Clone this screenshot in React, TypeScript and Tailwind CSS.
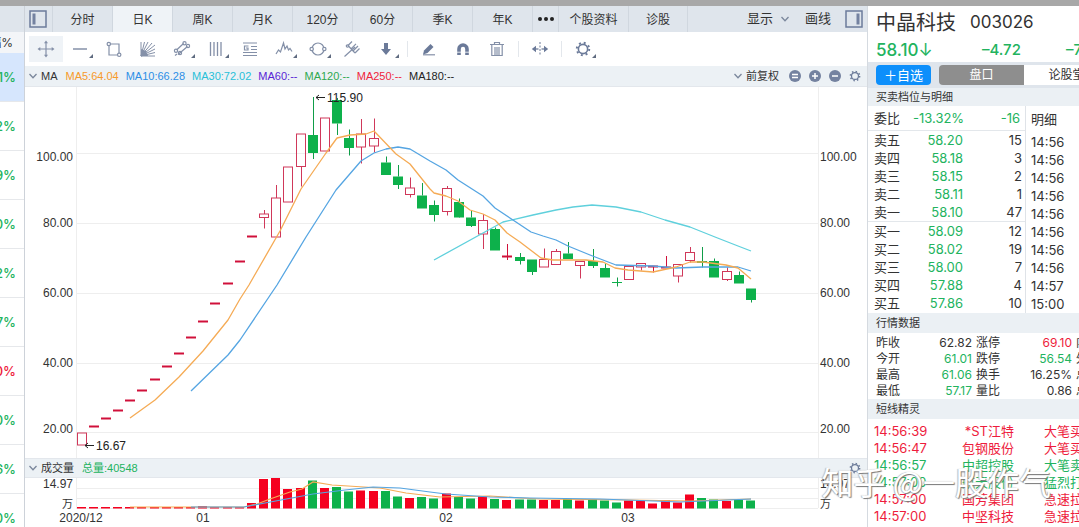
import { ReactNode } from 'react'
import clsx from 'clsx'

type Candle = {
  up: boolean
  top: number
  bottom: number
  high: number
  low: number
  vol: number
}

const STEP = 12.17
const FIRST = 81.5

const c = (
  up: boolean,
  top: number,
  bottom: number,
  high: number,
  low: number,
  vol: number
): Candle => ({ up, top, bottom, high, low, vol })

// limit-up days, drawn as a flat dash
const flat = (y: number, vol = 507): Candle => c(true, y, y, y, y, vol)

const candles: Candle[] = [
  c(true, 433, 445, 433, 445, 507),
  flat(426.5),
  flat(418.5),
  flat(410.5),
  flat(400.5),
  flat(390.5),
  flat(379.5),
  flat(366.5),
  flat(353.5),
  flat(337.5),
  flat(321.5, 506),
  flat(303.5),
  flat(283.5),
  flat(261.5),
  flat(236.5, 503),
  c(true, 214, 217.5, 210, 228.5, 479),
  c(true, 198, 237, 185, 237, 478),
  c(true, 167, 202, 167, 202, 489),
  c(true, 134, 166.5, 134, 186.5, 488),
  c(false, 135, 153, 97, 159, 480.5),
  c(true, 118, 151, 118, 151, 488),
  c(false, 100, 123.5, 98, 135, 487),
  c(false, 138, 148, 129.5, 155.5, 491.5),
  c(true, 134, 147, 119, 163.5, 490.5),
  c(true, 138.5, 146, 118.5, 152.5, 491),
  c(false, 162.5, 175, 156.5, 175, 491),
  c(false, 176.5, 185, 165, 189, 496.5),
  c(true, 188, 194.5, 177.5, 197.5, 498),
  c(false, 195.5, 208.5, 183, 208.5, 497),
  c(false, 205, 215, 200.5, 221.5, 498.5),
  c(true, 188.5, 211.5, 186, 215.5, 493.5),
  c(false, 202, 217.5, 198.5, 218, 497),
  c(false, 217.5, 226, 210, 227, 498.5),
  c(true, 220.5, 234, 214, 249, 496),
  c(false, 229, 250.5, 227.5, 250.5, 499),
  c(true, 256.5, 256.5, 244, 260, 500),
  c(false, 257, 261, 253, 264.5, 499.5),
  c(false, 259.5, 272, 259.5, 275, 499.5),
  c(true, 259.5, 267, 248.5, 267, 500),
  c(true, 251.5, 264.5, 249, 264.5, 500),
  c(false, 253.5, 259, 242, 259, 499),
  c(true, 261.5, 265.5, 261.5, 278.5, 500.5),
  c(false, 261, 266, 249, 268, 499),
  c(false, 268, 277.5, 263.5, 277.5, 500.5),
  c(false, 282, 283, 277.5, 286.5, 502.5),
  c(true, 266.5, 279.5, 266.5, 279.5, 500.5),
  c(true, 263.5, 267, 263.5, 270.5, 500.5),
  c(true, 266.5, 266.5, 266.5, 272.5, 503.5),
  c(true, 267.5, 267.5, 256, 268, 500),
  c(true, 264.5, 276, 264.5, 282.5, 502.5),
  c(true, 252.5, 260.5, 247, 262.5, 494.5),
  c(false, 261, 263, 247, 267.5, 498),
  c(false, 261, 277.5, 258.5, 277.5, 499.5),
  c(true, 271.5, 279.5, 267.5, 281, 501),
  c(false, 275, 283.5, 271.5, 283.5, 499.5),
  c(false, 288.5, 300, 288.5, 302.5, 500.5),
]

const ma5 =
  '130,418 155,400 179,377 203,351 228,320 240,299 249,285 280,231 301,189 326,153 337,138 350,135 366,134 374,131 396,154 410,164 430,189 434,193 446,196 458,201 470,210 483,214 495,220 507,233 520,242 541,258 553,260 586,260 603,262 615,268 628,270 653,272 676,267 690,262 703,262 726,265 738,268 751,279'
const ma10 =
  '191,391 228,355 240,340 277,285 306,237 336,190 361,161 374,153 386,149 398,147 410,149 430,161 446,170 458,180 483,196 495,208 516,222 531,232 543,236 556,240 568,246 590,255 603,260 616,265 653,266 676,268 703,267 738,267 751,271'
const ma30 =
  '434,260 483,233 503,222 533,215 556,210 573,207 592,205 604,206 616,207 641,212 665,220 690,227 715,237 738,246 751,251'
const vol5 =
  '130,507 244,507 257,504 270,499 290,492 302,489 313,482 332,485 380,488 406,493 440,497 490,496 520,498 540,499 630,500 690,501 751,499'
const vol10 =
  '191,507 244,507 265,503 313,494 345,490 373,487 400,488 430,492 446,494 490,497 530,498 600,499 680,502 751,499'

const priceTicks = [
  { label: '100.00', line: 153, y: 161 },
  { label: '80.00', line: 223, y: 227 },
  { label: '60.00', line: 293, y: 297 },
  { label: '40.00', line: 363, y: 367 },
  { label: '20.00', line: 432, y: 433 },
]

const periods = ['分时', '日K', '周K', '月K', '120分', '60分', '季K', '年K']

const averages = [
  { text: 'MA5:64.04', color: 'text-[#f79a2b]' },
  { text: 'MA10:66.28', color: 'text-[#2d8fe6]' },
  { text: 'MA30:72.02', color: 'text-[#27c0d8]' },
  { text: 'MA60:--', color: 'text-[#5a1fd6]' },
  { text: 'MA120:--', color: 'text-[#2fa84f]' },
  { text: 'MA250:--', color: 'text-[#f0243c]' },
  { text: 'MA180:--', color: 'text-[#222222]' },
]

const changes = ['1%', '2%', '9%', '0%', '2%', '7%', '0%', '0%', '6%', '0%']

const sells = [
  ['卖五', '58.20', '15'],
  ['卖四', '58.18', '3'],
  ['卖三', '58.15', '2'],
  ['卖二', '58.11', '1'],
  ['卖一', '58.10', '47'],
]
const buys = [
  ['买一', '58.09', '12'],
  ['买二', '58.02', '19'],
  ['买三', '58.00', '7'],
  ['买四', '57.88', '4'],
  ['买五', '57.86', '10'],
]
const ticks = [
  '14:56',
  '14:56',
  '14:56',
  '14:56',
  '14:56',
  '14:56',
  '14:56',
  '14:56',
  '14:57',
  '15:00',
]

const quotes = [
  ['昨收', '62.82', 'text-[#333333]', '涨停', '69.10', 'text-[#ee1c3c]', '内'],
  ['今开', '61.01', 'text-[#22b35e]', '跌停', '56.54', 'text-[#22b35e]', '外'],
  ['最高', '61.06', 'text-[#22b35e]', '换手', '16.25%', 'text-[#333333]', '总'],
  ['最低', '57.17', 'text-[#22b35e]', '量比', '0.86', 'text-[#333333]', '总'],
]

const alerts = [
  { time: '14:56:39', name: '*ST江特', action: '大笔买入', up: true },
  { time: '14:56:47', name: '包钢股份', action: '大笔买入', up: true },
  { time: '14:56:57', name: '中超控股', action: '大笔卖出', up: false },
  { time: '14:57:00', name: '航天股份', action: '猛烈打压', up: false },
  { time: '14:57:00', name: '国芳集团', action: '急速拉升', up: true },
  { time: '14:57:00', name: '中坚科技', action: '急速拉升', up: true },
]

function Icon({ children }: { children: ReactNode }) {
  return (
    <svg
      viewBox="0 0 18 18"
      className="h-[18px] w-[18px] shrink-0"
      fill="none"
      stroke="#8490a8"
      strokeWidth="1.2"
    >
      {children}
    </svg>
  )
}

function Gear({ className }: { className: string }) {
  return (
    <svg viewBox="0 0 18 18" className={className} fill="none" stroke="#6b7a99">
      <circle cx="9" cy="9" r="5.2" strokeWidth="1.8" />
      <circle cx="9" cy="9" r="7" strokeWidth="2.2" strokeDasharray="2.2 3.3" />
    </svg>
  )
}

function Chevron() {
  return (
    <svg viewBox="0 0 8 6" className="h-[6px] w-2 shrink-0" fill="none" stroke="#7b879c">
      <path d="M0.5 1 L4 4.8 L7.5 1" strokeWidth="1.3" />
    </svg>
  )
}

function PanelIcon({ right }: { right?: boolean }) {
  return (
    <svg viewBox="0 0 18 18" className="h-[18px] w-[18px] shrink-0" fill="none">
      <rect x="1" y="1" width="16" height="16" stroke="#6c7b9b" strokeWidth="1.5" />
      <rect x={right ? 11.5 : 3.5} y="3.5" width="3" height="11" fill="#7482a0" />
    </svg>
  )
}

function Tool({
  label,
  menu,
  active,
  children,
}: {
  label: string
  menu?: boolean
  active?: boolean
  children: ReactNode
}) {
  return (
    <button
      aria-label={label}
      className={clsx(
        'relative flex h-[26px] w-[34px] shrink-0 items-center justify-center',
        active && 'bg-[#eff3f7]'
      )}
    >
      {children}
      {menu && (
        <svg viewBox="0 0 4 4" className="absolute right-1 bottom-1 h-1 w-1">
          <path d="M4 0 V4 H0 Z" fill="#5f6b80" />
        </svg>
      )}
    </button>
  )
}

function Divider() {
  return (
    <div className="flex w-[9px] shrink-0 justify-center">
      <div className="h-4 w-px bg-[#e3e7ec]" />
    </div>
  )
}

function Toolbar() {
  return (
    <div className="flex h-[34px] items-center bg-white pl-1">
      <Tool label="移动" active>
        <Icon>
          <path d="M9 2 V16 M2 9 H16" />
          <path
            d="M9 0.5 L11 3.3 H7 Z M9 17.5 L11 14.7 H7 Z M0.5 9 L3.3 7 V11 Z M17.5 9 L14.7 7 V11 Z"
            fill="#8490a8"
            stroke="none"
          />
        </Icon>
      </Tool>
      <Tool label="直线" menu>
        <Icon>
          <path d="M2 9 H16" strokeWidth="1.5" />
        </Icon>
      </Tool>
      <Tool label="矩形">
        <Icon>
          <path d="M5 4 H14 V13 M12 15 H4 V6" />
          <circle cx="3.8" cy="4" r="1.7" />
          <circle cx="14.2" cy="14.8" r="1.7" />
        </Icon>
      </Tool>
      <Tool label="扇形线">
        <Icon>
          <path d="M2 16 V2 M2 16 L5.5 2 M2 16 L9 2 M2 16 L13 3 M2 16 L16 5 M2 16 L16 9 M2 16 L16 12.5 M2 16 H16" strokeWidth="1" />
          <path d="M2 9 L7 11 L9 16 H2 Z" fill="#8490a8" stroke="none" />
        </Icon>
      </Tool>
      <Tool label="通道线" menu>
        <Icon>
          <path d="M3.6 10 L10.5 3.5 M5 14.5 L14.5 6.5 M2 15.5 L4 14" />
          <circle cx="11.5" cy="3.2" r="1.6" />
          <circle cx="3" cy="10.8" r="1.6" />
          <circle cx="15" cy="6" r="1.6" />
          <circle cx="7" cy="13" r="1.6" />
        </Icon>
      </Tool>
      <Tool label="周期线" menu>
        <Icon>
          <path d="M3.5 2 V16 M7 2 V16 M10.5 2 V16 M14 2 V16" strokeWidth="1.3" />
        </Icon>
      </Tool>
      <Tool label="黄金分割">
        <Icon>
          <path d="M2 3 H16 M10 6.5 H16 M10 9.5 H16 M2 12.5 H16 M2 15.5 H16" />
          <path d="M7.5 6 H3.5 V10 H7 V8 H5" />
        </Icon>
      </Tool>
      <Tool label="波浪线" menu>
        <Icon>
          <path d="M1 14 L3.5 10 L5.5 12 L8.5 3 L10 9 L12 6 L13.5 10 L15 8.5 L17 11.5" />
        </Icon>
      </Tool>
      <Tool label="圆形" menu>
        <Icon>
          <circle cx="9" cy="9" r="6" />
          <circle cx="2.7" cy="9" r="1.7" fill="#ffffff" />
          <circle cx="15.3" cy="9" r="1.7" fill="#ffffff" />
        </Icon>
      </Tool>
      <Tool label="叉线">
        <Icon>
          <path d="M1.5 16.5 L12 7 M5 5.5 L12 13 M5 5.5 L9 1.5 M8 8.8 L13 3.8 M12 13 L16.5 8.5 M10 11 L15 6" />
          <circle cx="4.5" cy="6" r="1.2" />
        </Icon>
      </Tool>
      <Tool label="箭头" menu>
        <Icon>
          <path d="M7 3 H11 V9 H14 L9 15 L4 9 H7 Z" fill="#6b7a99" stroke="none" />
        </Icon>
      </Tool>
      <Divider />
      <Tool label="画笔">
        <Icon>
          <path d="M3 14.5 L4 10.5 L10.5 4 L13.5 7 L7.5 13 Z" fill="#6b7a99" stroke="none" />
          <path d="M3 14.8 H15" />
        </Icon>
      </Tool>
      <Tool label="磁铁">
        <Icon>
          <path d="M5 15 V9 A4 4 0 0 1 13 9 V15" stroke="#6b7a99" strokeWidth="3.6" />
          <path d="M3 12.2 H7 M11 12.2 H15" stroke="#ffffff" strokeWidth="0.8" />
        </Icon>
      </Tool>
      <Tool label="删除">
        <Icon>
          <path d="M2 4.5 H16 M6.5 4 V2.5 H11.5 V4 M3.8 4.5 V15.5 H14.2 V4.5 M7 7 V15 M9 7 V15 M11 7 V15" />
        </Icon>
      </Tool>
      <Divider />
      <Tool label="区间">
        <Icon>
          <path d="M9 2 V16" strokeDasharray="2 1.5" />
          <path d="M4 9 H7.5 M10.5 9 H14" strokeWidth="1.6" />
          <path d="M0.8 9 L5 5.8 V12.2 Z M17.2 9 L13 5.8 V12.2 Z" fill="#6b7a99" stroke="none" />
        </Icon>
      </Tool>
      <Divider />
      <Tool label="设置" menu>
        <Gear className="h-4 w-4" />
      </Tool>
    </div>
  )
}

function PriceChart() {
  return (
    <svg viewBox="25 87 842 371" className="block w-full">
      {priceTicks.map((t) => (
        <g key={t.label}>
          <path d={`M76 ${t.line + 0.5} H818`} stroke="#eeeeee" />
          <text x="73" y={t.y} textAnchor="end" className="fill-[#333333] text-[12px]">
            {t.label}
          </text>
          <text x="820" y={t.y} className="fill-[#333333] text-[12px]">
            {t.label}
          </text>
        </g>
      ))}
      <path d="M76.5 87 V458 M818.5 87 V458" stroke="#eeeeee" />
      {candles.map((k, i) => {
        const x = Math.round(FIRST + i * STEP)
        if (k.top === k.bottom) {
          return (
            <g key={i} stroke="#d0103a">
              <path d={`M${x - 5} ${k.top} H${x + 5}`} strokeWidth="2" />
              <path d={`M${x + 0.5} ${k.high} V${k.low}`} />
            </g>
          )
        }
        return (
          <g key={i} stroke={k.up ? '#d0385a' : '#0f9d48'}>
            <path d={`M${x + 0.5} ${k.high} V${k.top} M${x + 0.5} ${k.bottom} V${k.low}`} />
            {k.up ? (
              <rect x={x - 4.5} y={k.top} width="9" height={k.bottom - k.top} fill="none" />
            ) : (
              <rect
                x={x - 5}
                y={k.top}
                width="10"
                height={k.bottom - k.top}
                fill="#0db14b"
                stroke="none"
              />
            )}
          </g>
        )
      })}
      <g fill="none" strokeWidth="1.3" strokeLinejoin="round">
        <polyline points={ma30} stroke="#5fd0dc" />
        <polyline points={ma10} stroke="#55a5e2" />
        <polyline points={ma5} stroke="#f5ab55" />
      </g>
      <path d="M316 97.5 H325 M319 95 L316 97.5 L319 100" stroke="#222222" fill="none" />
      <text x="327" y="102" className="fill-[#222222] text-[12px]">
        115.90
      </text>
      <path d="M85 445.5 H94 M88 443 L85 445.5 L88 448" stroke="#222222" fill="none" />
      <text x="96" y="450" className="fill-[#222222] text-[12px]">
        16.67
      </text>
    </svg>
  )
}

function VolumeChart() {
  return (
    <svg viewBox="25 478 842 49" className="block w-full">
      <path d="M76 488.5 H818 M76 498.5 H818 M76 508.5 H818 M76.5 478 V508 M818.5 478 V508" stroke="#eeeeee" />
      <g className="fill-[#333333] text-[12px]">
        <text x="73" y="488" textAnchor="end">
          14.97
        </text>
        <text x="73" y="508" textAnchor="end" className="text-[11px]">
          万
        </text>
        <text x="820" y="488">
          14.97
        </text>
        <text x="820" y="508" className="text-[11px]">
          万
        </text>
        <text x="81" y="522" textAnchor="middle">
          2020/12
        </text>
        <text x="203" y="522" textAnchor="middle">
          01
        </text>
        <text x="446" y="522" textAnchor="middle">
          02
        </text>
        <text x="628" y="522" textAnchor="middle">
          03
        </text>
      </g>
      {candles.map((k, i) => (
        <rect
          key={i}
          x={Math.round(FIRST + i * STEP) - 5}
          y={k.vol}
          width="9"
          height={508.5 - k.vol}
          fill={k.up ? '#f5001f' : '#0db14b'}
        />
      ))}
      <g fill="none" strokeWidth="1.2">
        <polyline points={vol5} stroke="#f5ab55" />
        <polyline points={vol10} stroke="#55a5e2" />
      </g>
    </svg>
  )
}

function SectionTitle({ children }: { children: ReactNode }) {
  return <h2 className="h-5 bg-[#ebf0f4] px-2 text-[11px] leading-5">{children}</h2>
}

function BookRows({ rows }: { rows: string[][] }) {
  return (
    <table className="w-full">
      <tbody>
        {rows.map(([name, price, qty]) => (
          <tr key={name} className="h-[18px]">
            <td className="pl-1.5">{name}</td>
            <td className="w-[60px] text-right text-[#22b35e]">{price}</td>
            <td className="w-[62px] pr-[3px] text-right">{qty}</td>
          </tr>
        ))}
      </tbody>
    </table>
  )
}

function QuotePanel() {
  return (
    <aside className="w-[212px] shrink-0 overflow-hidden border-l border-[#d5dae0] bg-white font-['Inter','Noto_Sans_CJK_SC',sans-serif] text-[13px] leading-[18px] whitespace-nowrap text-[#333333]">
      <header className="h-14 px-2 pt-0.5">
        <h1 className="flex h-[30px] items-center gap-3.5 text-xl">
          中晶科技 <span className="text-[17px]">003026</span>
        </h1>
        <div className="flex h-6 items-center font-medium text-[#22b35e]">
          <span className="w-[106px] shrink-0 text-[17px]">
            58.10<span className="font-normal">↓</span>
          </span>
          <span className="w-[84px] shrink-0 text-[15px]">–4.72</span>
          <span className="text-[15px]">–7.51%</span>
        </div>
      </header>
      <div className="flex h-[26px] items-center bg-[#dfe5ec] pl-2">
        <button className="h-5 w-[55px] shrink-0 rounded-sm bg-[#0d8ffb] text-[13px] leading-5 text-white">
          ＋自选
        </button>
        <button className="ml-2 h-5 w-[85px] shrink-0 rounded-l-sm bg-[#8e8e8e] text-[12px] leading-5 text-white">
          盘口
        </button>
        <button className="h-5 w-[85px] shrink-0 bg-white text-[12px] leading-5">论股堂</button>
      </div>
      <h2 className="h-[18px] bg-[#ebf0f4] px-2 text-[11px] leading-[18px]">买卖档位与明细</h2>

      <div className="flex">
        <div className="w-[158px] shrink-0 border-r border-[#dfe3e8]">
          <div className="flex h-[25px] items-center border-b border-[#e3e7eb] pr-[5px] pl-1.5">
            <span className="w-[39px]">委比</span>
            <span className="text-[#22b35e]">-13.32%</span>
            <span className="flex-1 text-right text-[#22b35e]">-16</span>
          </div>
          <BookRows rows={sells} />
          <div className="border-t border-[#e3e7eb]">
            <BookRows rows={buys} />
          </div>
        </div>
        <div className="pl-[5px]">
          <div className="h-[27px] pt-1">明细</div>
          <ul>
            {ticks.map((t, i) => (
              <li key={i} className="h-[18px]">
                {t}
              </li>
            ))}
          </ul>
        </div>
      </div>

      <SectionTitle>行情数据</SectionTitle>
      <table className="mt-0.5 w-[224px] table-fixed text-[12px] leading-4">
        <tbody>
          {quotes.map(([a, av, ac, b, bv, bc, d]) => (
            <tr key={a}>
              <td className="w-9 pl-2">{a}</td>
              <td className={clsx('w-[68px] text-right', ac)}>{av}</td>
              <td className="w-8 pl-1">{b}</td>
              <td className={clsx('w-[68px] text-right', bc)}>{bv}</td>
              <td className="w-5 pl-1">{d}</td>
            </tr>
          ))}
        </tbody>
      </table>

      <SectionTitle>短线精灵</SectionTitle>
      <ul className="pt-1 leading-[17px]">
        {alerts.map((a, i) => (
          <li
            key={i}
            className={clsx('flex h-[17px] pl-1.5', a.up ? 'text-[#ee1c3c]' : 'text-[#22b35e]')}
          >
            <span className="w-[60px] shrink-0">{a.time}</span>
            <span className="w-20 shrink-0 text-right">{a.name}</span>
            <span className="ml-[30px]">{a.action}</span>
          </li>
        ))}
      </ul>
    </aside>
  )
}

export default function App() {
  return (
    <div className="relative flex h-screen flex-col overflow-hidden bg-white font-['Liberation_Sans','Noto_Sans_CJK_SC',sans-serif] text-[#333333]">
      <div className="h-1.5 shrink-0 bg-[#a8a8a8]" />
      <div className="flex min-h-0 flex-1">
        <aside className="w-[25px] shrink-0 overflow-hidden border-r border-[#cdd2d9] font-['Inter','Noto_Sans_CJK_SC',sans-serif] text-[13px]">
          <div className="h-[26px] bg-[#dfe5ec]" />
          <div className="flex h-[21px] items-center justify-end bg-[#f3f5f8] pr-[11px] text-[12px] whitespace-nowrap">
            幅%
          </div>
          {changes.map((v, i) => (
            <div
              key={i}
              className={clsx(
                'flex h-[49px] items-center justify-end border-b border-[#e6e8eb] pt-0.5 pr-2 font-medium',
                i === 0 && 'bg-[#d6e6fd]',
                i === 6 ? 'text-[#ee1c3c]' : 'text-[#22b35e]'
              )}
            >
              {v}
            </div>
          ))}
        </aside>

        <main className="min-w-0 flex-1">
          <nav className="flex h-[26px] items-center bg-[#dfe5ec] text-[12px] whitespace-nowrap">
            <button aria-label="左侧栏" className="flex h-full w-[27px] items-center pl-1">
              <PanelIcon />
            </button>
            {periods.map((p) => (
              <button
                key={p}
                className={clsx(
                  'h-full w-[60px] border-l border-[#d0d7df] pt-0.5',
                  p === '日K' && 'bg-[#eff3f7]'
                )}
              >
                {p}
              </button>
            ))}
            <button
              aria-label="更多"
              className="flex h-full w-[26px] items-center justify-center gap-0.5 border-l border-[#d0d7df]"
            >
              <i className="h-1 w-1 rounded-full bg-[#222222]" />
              <i className="h-1 w-1 rounded-full bg-[#222222]" />
              <i className="h-1 w-1 rounded-full bg-[#222222]" />
            </button>
            <button className="h-full w-[70px] border-l border-[#d0d7df] pt-0.5">个股资料</button>
            <button className="h-full w-[60px] border-x border-[#d0d7df] pt-0.5">诊股</button>
            <div className="ml-auto flex items-center pr-1 text-[13px]">
              <button className="flex items-center gap-2">
                显示 <Chevron />
              </button>
              <button className="ml-4">画线</button>
              <button aria-label="右侧栏" className="ml-3.5">
                <PanelIcon right />
              </button>
            </div>
          </nav>

          <Toolbar />

          <div className="flex h-[21px] items-center border-b border-[#e3e7ec] bg-[#ecf1f5] pr-1.5 pl-1 text-[11px] whitespace-nowrap">
            <Chevron />
            <span className="mr-2 ml-1">MA</span>
            <div className="flex gap-[7px]">
              {averages.map((m) => (
                <span key={m.text} className={m.color}>
                  {m.text}
                </span>
              ))}
            </div>
            <div className="ml-auto flex items-center">
              <Chevron />
              <span className="mr-2.5 ml-1">前复权</span>
              <div className="flex gap-2">
                {['M3 4.5 H9 M3 7.5 H9', 'M3 6 H9 M6 3 V9', 'M3 6 H9'].map((d) => (
                  <svg key={d} viewBox="0 0 12 12" className="h-3 w-3" stroke="#ffffff">
                    <circle cx="6" cy="6" r="6" fill="#7482a0" stroke="none" />
                    <path d={d} strokeWidth="1.5" />
                  </svg>
                ))}
                <Gear className="h-3 w-3" />
              </div>
            </div>
          </div>

          <PriceChart />

          <div className="flex h-5 items-center border-y border-[#e3e7ec] bg-[#ecf1f5] pr-1.5 pl-1 text-[11px]">
            <Chevron />
            <span className="mr-2 ml-1">成交量</span>
            <span className="text-[#22b35e]">总量:40548</span>
            <Gear className="ml-auto h-3 w-3" />
          </div>

          <VolumeChart />
        </main>

        <QuotePanel />
      </div>

      <div className="absolute right-7 bottom-[26px] font-['Noto_Sans_CJK_SC',sans-serif] text-[32px] leading-10 whitespace-nowrap text-white [text-shadow:1px_1px_1px_#777777,-1px_0_1px_#bbbbbb]">
        知乎 @一股作气
      </div>
    </div>
  )
}
